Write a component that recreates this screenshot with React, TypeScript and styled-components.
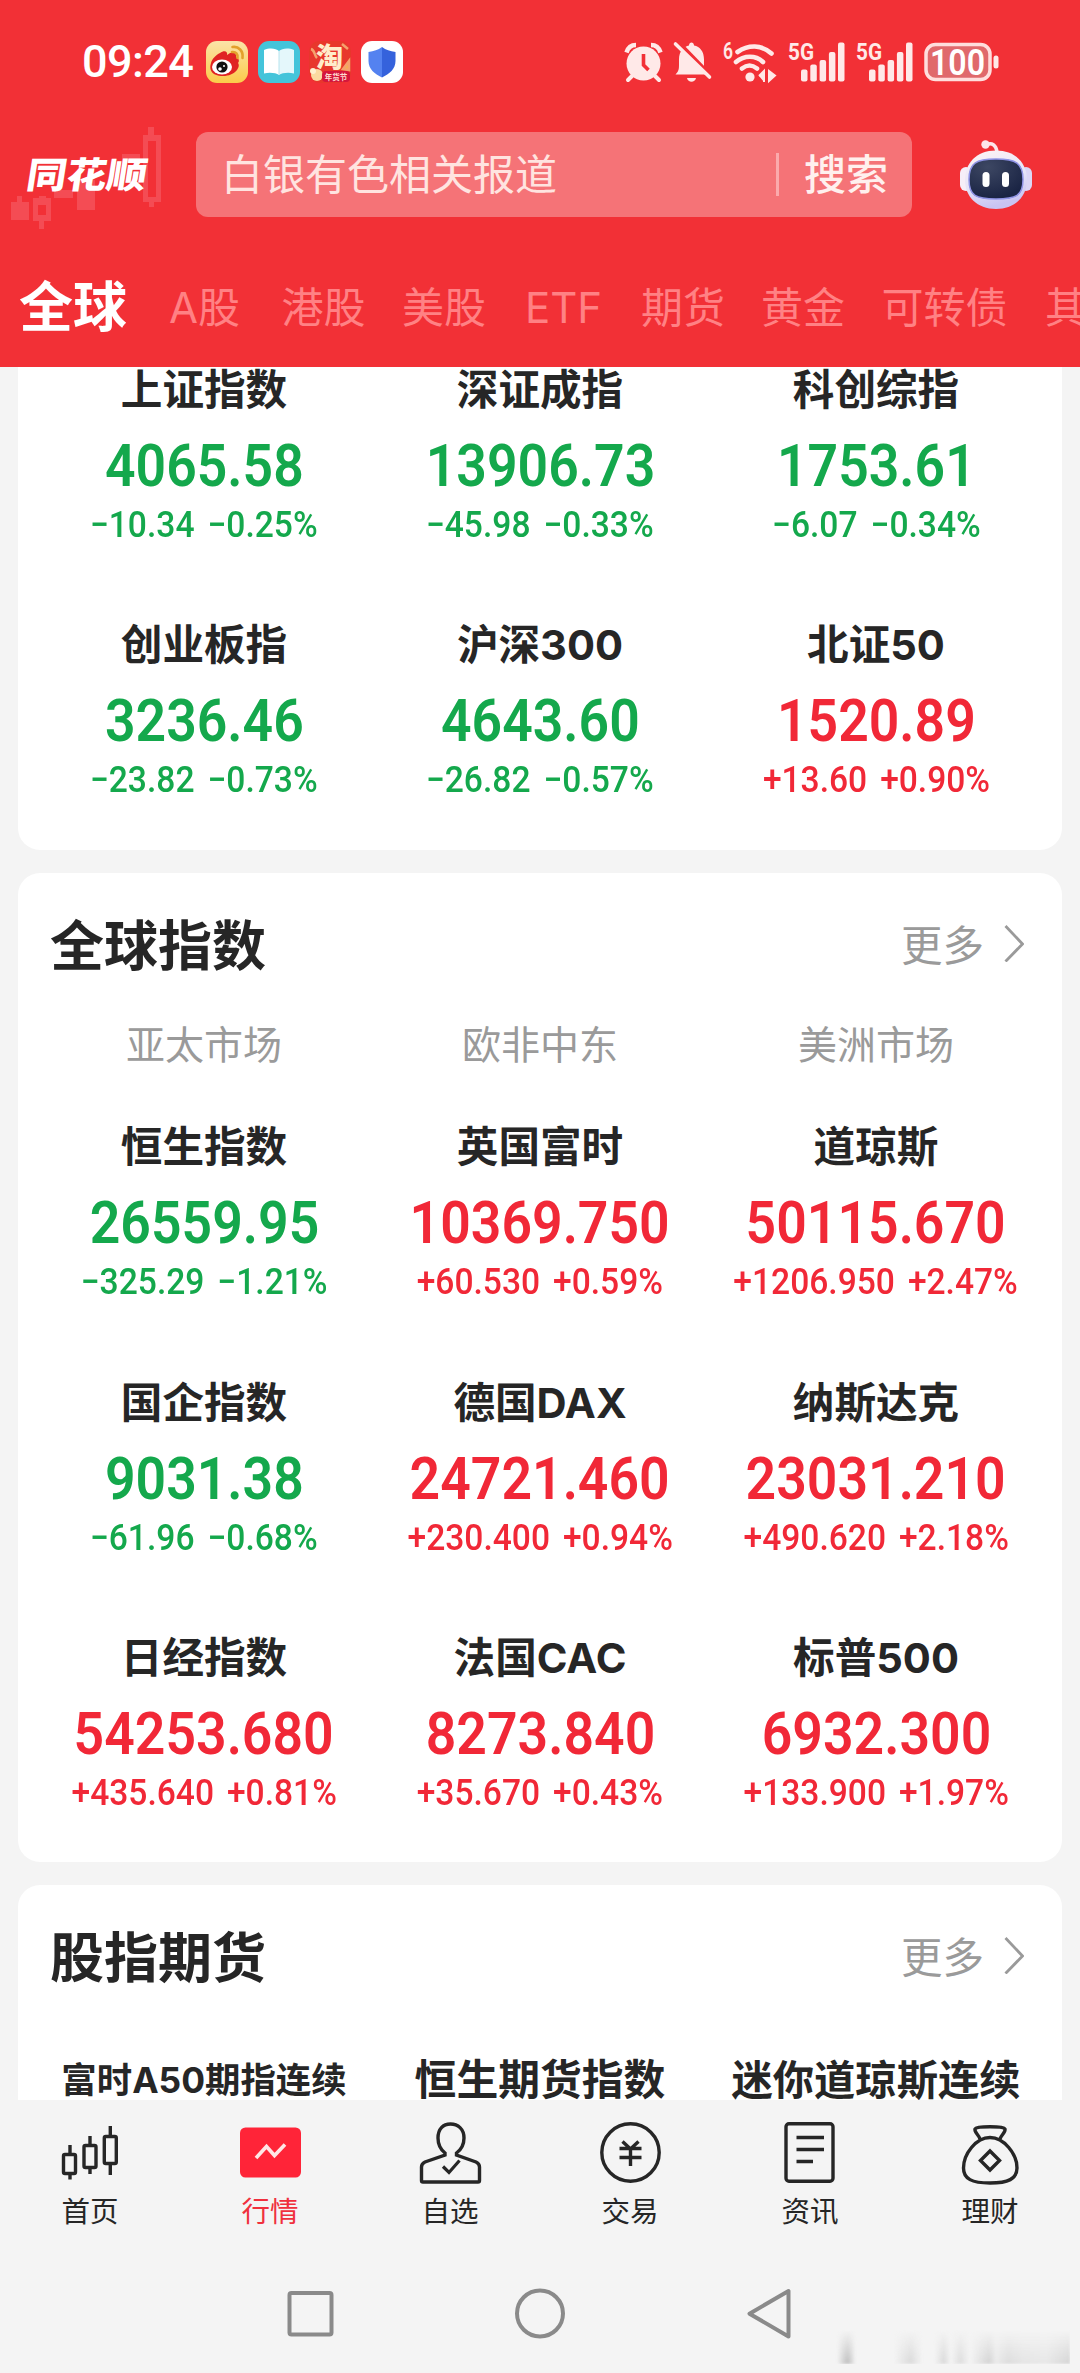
import React from 'react';
import styled, { createGlobalStyle } from 'styled-components';

const RED = '#f23036';
const UP = '#f12837';
const DOWN = '#14a84c';
const INK = '#262626';
const CJK = '"Noto Sans CJK SC", "Noto Sans", sans-serif';
const MIXED = 'Inter, "Noto Sans CJK SC", sans-serif';
const NUM = 'Roboto, "Liberation Sans", sans-serif';

const GlobalStyle = createGlobalStyle`
  * { box-sizing: border-box; }
  body { margin: 0; background: #f4f4f4; font-family: ${CJK}; color: ${INK}; }
`;

const Screen = styled.div`
  display: flex;
  flex-direction: column;
  width: 1080px;
  height: 2373px;
  overflow: hidden;
  background: #f4f4f4;
`;

/* ---------- header ---------- */
const Header = styled.header`
  flex: none;
  display: flex;
  flex-direction: column;
  height: 367px;
  background: ${RED};
`;
const StatusBar = styled.div`
  display: flex;
  align-items: center;
  height: 124px;
  padding: 0 80px 0 82px;
`;
const Clock = styled.span`
  width: 124px;
  font: 500 45px/60px ${NUM};
  color: #fff;
  letter-spacing: -0.6px;
`;
const AppIcons = styled.div`
  display: flex;
  gap: 9.6px;
  flex: 1;
  svg { display: block; width: 42px; height: 42px; }
`;
const Signals = styled.div`
  display: flex;
  align-items: center;
  gap: 11px;
  svg { display: block; overflow: visible; }
`;

const SearchRow = styled.div`
  display: flex;
  align-items: center;
  height: 101px;
`;
const Brand = styled.div`
  display: grid;
  width: 196px;
  height: 115px;
  align-items: center;
  > * { grid-area: 1 / 1; }
`;
const BrandName = styled.span`
  padding: 0 0 5px 27px;
  font: 900 40px/48px ${CJK};
  color: #fff;
  transform: skewX(-9deg) scaleY(0.9);
  transform-origin: 90px 50%;
`;
const SearchBox = styled.div`
  display: flex;
  align-items: center;
  width: 716px;
  height: 85px;
  padding: 0 24px 0 25px;
  border-radius: 12px;
  background: #f57377;
  font-size: 42px;
  line-height: 60px;
  color: #ffe4e0;
`;
const Placeholder = styled.span`
  flex: 1;
  padding-bottom: 5px;
`;
const Divider = styled.i`
  width: 3px;
  height: 43px;
  margin-right: 25px;
  background: #fbaaac;
`;
const SearchLabel = styled.span`
  padding-bottom: 5px;
  font-weight: 500;
  color: #fff0ee;
`;
const Robot = styled.svg`
  display: block;
  margin-left: 47px;
`;

const Tabs = styled.nav`
  display: flex;
  height: 142px;
  padding-top: 9px;
  overflow: hidden;
`;
const Tab = styled.span<{ $w: number; $active?: boolean }>`
  flex: none;
  width: ${p => p.$w}px;
  text-align: center;
  white-space: nowrap;
  font-family: ${MIXED};
  font-size: ${p => (p.$active ? 54 : 42)}px;
  font-weight: ${p => (p.$active ? 700 : 400)};
  line-height: ${p => (p.$active ? 147 : 147)}px;
  color: ${p => (p.$active ? '#fff' : '#ff8184')};
`;

/* ---------- content ---------- */
const Content = styled.main`
  flex: none;
  display: flex;
  flex-direction: column;
  gap: 23px;
  height: 1733px;
  padding: 0 18px;
  overflow: hidden;
`;
const Card = styled.section<{ $scrolled?: boolean }>`
  flex: none;
  padding: ${p => (p.$scrolled ? '20px 18px 51px' : '0 18px 50px')};
  margin-top: ${p => (p.$scrolled ? '-23px' : '0')};
  border-radius: 22px;
  background: #fff;
`;
const CardHead = styled.div`
  display: flex;
  align-items: center;
  justify-content: space-between;
  height: 144px;
  padding: 0 20px 4px 14px;
`;
const CardTitle = styled.h2`
  margin: 0;
  font-size: 54px;
  font-weight: 700;
  line-height: 70px;
`;
const More = styled.span`
  display: flex;
  align-items: center;
  gap: 20px;
  font-size: 41.5px;
  line-height: 60px;
  color: #9a9a9a;
`;
const Regions = styled.div`
  display: grid;
  grid-template-columns: repeat(3, 336px);
  height: 104px;
  text-align: center;
  font-size: 39px;
  line-height: 51px;
  color: #9a9a9a;
`;
const Grid = styled.div<{ $offset?: number }>`
  display: grid;
  grid-template-columns: repeat(3, 336px);
  grid-auto-rows: 180px;
  row-gap: 75.4px;
  padding-top: ${p => p.$offset ?? 0}px;
`;
const Cell = styled.div<{ $up?: boolean }>`
  display: flex;
  flex-direction: column;
  align-items: center;
  white-space: nowrap;
  color: ${p => (p.$up ? UP : DOWN)};
`;
const Name = styled.span<{ $size?: number }>`
  height: 50px;
  margin-bottom: 21px;
  font-family: ${MIXED};
  font-size: ${p => p.$size ?? 41.6}px;
  font-weight: 700;
  line-height: 53px;
  color: ${INK};
`;
const Value = styled.span`
  height: 60px;
  margin-bottom: 9px;
  font: 600 60px/62px ${NUM};
  transform: scaleX(0.893);
`;
const Change = styled.span`
  font: 500 36.5px/42px ${NUM};
  word-spacing: 5px;
  transform: scaleX(0.92);
`;

/* ---------- bottom ---------- */
const BottomNav = styled.nav`
  flex: none;
  display: grid;
  grid-template-columns: repeat(6, 180px);
  height: 150px;
`;
const NavItem = styled.div<{ $active?: boolean }>`
  display: flex;
  flex-direction: column;
  align-items: center;
  padding-top: 20px;
  font-size: 28.5px;
  line-height: 40px;
  color: ${p => (p.$active ? '#f0303d' : INK)};
  svg { display: block; }
`;
const SystemBar = styled.div`
  flex: 1;
  display: grid;
  grid-template-columns: 284px 228px 228px 84px 256px;
  height: 123px;
  svg { display: block; }
`;
const SysKey = styled.div`
  display: flex;
  padding-top: 36px;
`;
const Smudge = styled.div`
  align-self: end;
  width: 238px;
  height: 34px;
  margin: 0 0 9px 8px;
  opacity: 0.6;
  filter: blur(1px);
  background:
    linear-gradient(90deg, transparent 0 2%, #aaa 6% 7%, transparent 10% 26%, #ccc 33%, transparent 38% 43%, #ccc 47%, transparent 50%, #d2d2d2 54%, transparent 58%, #c2c2c2 66%, #e6e6e6 69%, #d0d0d0 74%, #ddd 80%, #e2e2e2 90%, #c4c4c4);
  mask-image: linear-gradient(180deg, transparent, #000 90%);
`;

/* ---------- icons ---------- */
const WeiboIcon = () => (
  <svg viewBox="0 0 42 42">
    <defs>
      <linearGradient id="wb" x1="0" y1="0" x2="0" y2="1">
        <stop offset="0" stopColor="#fbe3a8" />
        <stop offset="1" stopColor="#fbcb4a" />
      </linearGradient>
    </defs>
    <rect width="42" height="42" rx="11" fill="url(#wb)" />
    <path d="M14 12c4-3 8-2 7 2 5-4 10-3 9 2 4 2 3 5 2 6 3 4-3 13-15 13S3 28 5 22c1-4 5-8 9-10z" fill="#e02322" />
    <ellipse cx="16" cy="26" rx="10" ry="7.6" fill="#fff" />
    <circle cx="16" cy="26" r="5.6" fill="#111" />
    <circle cx="14" cy="28" r="1.8" fill="#fff" />
    <circle cx="18" cy="25" r="1" fill="#fff" />
    <path d="M26.500 6c6-1 11 4 10 11M26 11c4-.5 6 2 5.500 6" fill="none" stroke="#e3a02c" strokeWidth="2.600" strokeLinecap="round" />
  </svg>
);
const BookIcon = () => (
  <svg viewBox="0 0 42 42">
    <rect width="42" height="42" rx="11" fill="#44c4da" />
    <path d="M6 9c6-2.500 12-1.500 15 1v24c-3-2-9-3-15-1.500z" fill="#fff" />
    <path d="M36 9c-6-2.500-12-1.500-15 1v24c3-2 9-3 15-1.500z" fill="#e4f7fb" />
    <path d="M21 10v24" stroke="#b7e4ee" strokeWidth="1" />
  </svg>
);
const TaobaoIcon = () => (
  <svg viewBox="0 0 42 42">
    <rect width="42" height="42" rx="11" fill="#e8372c" />
    <path d="M2 8c4 1 3 6 6 9M33 3l6 5M34 28l6-8v9z" stroke="#f5a16c" strokeWidth="2.500" fill="#f3b14d" />
    <circle cx="8" cy="34" r="6" fill="#fbd9a0" />
    <circle cx="4" cy="30" r="3" fill="#fff0cf" />
    <rect x="13" y="30" width="28" height="11" rx="4" fill="#d5163c" />
    <text x="20.500" y="26" fontSize="27" fontWeight="900" textAnchor="middle" fill="#ffeccb" fontFamily={CJK}>淘</text>
    <text x="27" y="38.500" fontSize="7.500" fontWeight="700" textAnchor="middle" fill="#ffdcd0" fontFamily={CJK}>年货节</text>
  </svg>
);
const ShieldIcon = () => (
  <svg viewBox="0 0 42 42">
    <rect width="42" height="42" rx="11" fill="#fff" />
    <path d="M21 6c4 3 8 4 13.500 5v9c0 8-6 13-13.500 16.500z" fill="#3562dc" />
    <path d="M21 6c-4 3-8 4-13.500 5v9c0 8 6 13 13.500 16.500z" fill="#5482f0" />
  </svg>
);

const P = '#ffe9e8';
const AlarmIcon = () => (
  <svg width="38" height="40" viewBox="0 0 38 40">
    <circle cx="18.500" cy="21.500" r="17" fill={P} />
    <path d="M1.500 10.500C3 5.500 6.500 3 11 3M26 3c4.500 0 8 2.500 9.500 7.500" stroke={P} strokeWidth="4.500" fill="none" />
    <path d="M8 33l-5 5M29 33l5 5" stroke={P} strokeWidth="4" strokeLinecap="round" />
    <path d="M18.500 12v11l5 5" stroke={RED} strokeWidth="3.600" fill="none" />
  </svg>
);
const BellOffIcon = () => (
  <svg width="38" height="42" viewBox="0 0 38 42">
    <path d="M1.500 33.500c4-4 3.500-6 3.500-15C5 10 10 5.500 15 4.500c0-4 5-4 5 0 6 1 10 6 10 14 0 9-.5 11 4 15z" fill={P} />
    <path d="M13 37h9c-1 5-8 5-9 0z" fill={P} />
    <path d="M4.500 1.500l32 33" stroke={RED} strokeWidth="4" />
    <path d="M1.500 3l34 33" stroke={P} strokeWidth="3.600" strokeLinecap="round" />
  </svg>
);
const WifiIcon = () => (
  <svg width="54" height="42" viewBox="0 0 54 42">
    <text x="0" y="17.500" fontSize="23" fontWeight="600" fill={P} fontFamily={NUM} textLength="10" lengthAdjust="spacingAndGlyphs">6</text>
    <path d="M14.500 11c11-7.500 24-7.500 34 1.500M13 21c8-7 20-7 27 0M19 27.500c5-4 10-4 15 0" stroke={P} strokeWidth="4.600" fill="none" strokeLinecap="round" />
    <circle cx="27" cy="36" r="4.600" fill={P} />
    <path d="M36 35l5-5v11M52 34.500l-6 5.500V30z" stroke={P} strokeWidth="2" fill={P} />
  </svg>
);
const SignalIcon = () => (
  <svg width="57" height="42" viewBox="0 0 57 42">
    <text x="0" y="19" fontSize="24.500" fontWeight="700" fill={P} fontFamily={NUM} textLength="26" lengthAdjust="spacingAndGlyphs">5G</text>
    <g fill={P}>
      <rect x="13" y="28.500" width="6.500" height="12" rx="2" />
      <rect x="22.300" y="23.500" width="6.500" height="17" rx="2" />
      <rect x="31.600" y="19" width="6.500" height="21.500" rx="2" />
      <rect x="40.900" y="11" width="6.500" height="29.500" rx="2" />
      <rect x="50" y="1.500" width="6.500" height="39" rx="2" />
    </g>
  </svg>
);
const BatteryIcon = () => (
  <svg width="76" height="40" viewBox="0 0 76 40">
    <rect x="2" y="2.500" width="64" height="35" rx="9.500" fill="#e0696c" stroke="#ffdedd" strokeWidth="3.500" />
    <rect x="69.500" y="13.500" width="5" height="13" rx="2.500" fill={P} />
    <text x="6" y="32.500" fontSize="36" fontWeight="600" fill="#fff" fontFamily={NUM} textLength="55" lengthAdjust="spacingAndGlyphs">100</text>
  </svg>
);
const BrandCandles = () => (
  <svg width="196" height="115" viewBox="0 117 196 115" fill="#f5525a" opacity="0.85">
    <rect x="11" y="202" width="18" height="18" />
    <rect x="17" y="196" width="5" height="7" />
    <path d="M33 198h6v-2h7v2h5v23h-7v8h-5v-8h-6zM38 205v10h8v-10z" fillRule="evenodd" />
    <path d="M54 190h19v8H54z" />
    <rect x="77" y="180" width="18" height="30" />
    <path d="M122 154h18v8h-18z" />
    <path d="M143 135h5v-8h6v8h7v67h-7v5h-5v-5h-6zM148 141v56h8v-56z" fillRule="evenodd" />
  </svg>
);
const RobotIcon = () => (
  <Robot width="74" height="70" viewBox="0 0 74 70">
    <defs>
      <linearGradient id="rb" x1="0" y1="0" x2="0.300" y2="1">
        <stop offset="0" stopColor="#fff4f4" />
        <stop offset="0.600" stopColor="#e6e4f8" />
        <stop offset="1" stopColor="#c9c4f2" />
      </linearGradient>
      <radialGradient id="face" cx="0.350" cy="0.200" r="0.800">
        <stop offset="0" stopColor="#3d4763" />
        <stop offset="1" stopColor="#1a2444" />
      </radialGradient>
    </defs>
    <path d="M27 5c6-3 10 0 11 7" stroke="#fde5ea" strokeWidth="3.500" fill="none" />
    <circle cx="26.500" cy="4.500" r="4.200" fill="#fde5ea" />
    <rect x="1" y="27" width="12" height="24" rx="6" fill="#f6eef8" />
    <rect x="61" y="27" width="12" height="24" rx="6" fill="#dcd6f6" />
    <path d="M37 10.500c20 0 31 13 31 29.500S56 69 37 69 6 56.500 6 40 17 10.500 37 10.500z" fill="url(#rb)" />
    <path d="M37 19c20 0 27 4 27 20.500S57 59 37 59 10 56 10 39.500 17 19 37 19z" fill="url(#face)" stroke="#8f93e6" strokeWidth="1.500" />
    <rect x="23.500" y="32" width="7" height="15" rx="3.500" fill="#fff" />
    <rect x="43" y="32" width="7" height="15" rx="3.500" fill="#fff" />
  </Robot>
);
const Chevron = () => (
  <svg width="20" height="38" viewBox="0 0 20 38">
    <path d="M1.500 2L18.500 20 1.500 37.500" fill="none" stroke="#9a9a9a" strokeWidth="2.800" />
  </svg>
);

const Line: React.FC<{ children: React.ReactNode }> = ({ children }) => (
  <svg width="64" height="70" viewBox="0 0 64 70" fill="none" stroke={INK} strokeWidth="3.400">{children}</svg>
);
const HomeIcon = () => (
  <Line>
    <rect x="5.500" y="34.500" width="12" height="19" rx="1.500" />
    <rect x="26" y="25.500" width="12" height="22" rx="1.500" />
    <rect x="46.300" y="16.500" width="12" height="27" rx="1.500" />
    <path d="M12 25v9M12 53v6.500M32 16v9M32 47v7M52.300 6v10M52.300 43v12" />
  </Line>
);
const MarketIcon = () => (
  <svg width="64" height="70" viewBox="0 0 64 70">
    <rect x="2" y="7.500" width="61" height="50" rx="5.500" fill="#ff2438" />
    <path d="M18 38l10.500-11.500 8 9L47 24.500" fill="none" stroke="#ffe6e6" strokeWidth="3.600" />
  </svg>
);
const UserIcon = () => (
  <Line>
    <path d="M27 34c-5-4-7-9-7-15 0-9 5-14 12.500-14S46 10 46 19c0 6-2 11-7.500 15v2l19.500 7c2.500 1.200 3.500 2.500 3.500 5v13.500c0 1-.8 1.500-1.500 1.500H5c-.8 0-1.500-.5-1.500-1.500V48c0-2.500 1-3.800 3.500-5l20-7z" transform="translate(0 -1)" />
    <path d="M25 46.500l6 6 10.500-12" strokeWidth="3.200" />
  </Line>
);
const TradeIcon = () => (
  <Line>
    <circle cx="32.500" cy="32.500" r="28.700" />
    <path d="M24.500 21.500l8 7.500 8-7.500M21.500 28.500h22M21.500 37.500h22M32.500 28.500V46" />
  </Line>
);
const NewsIcon = () => (
  <Line>
    <rect x="8" y="3.800" width="47" height="57.500" rx="3" />
    <path d="M18.500 17.500H46M18.500 29.500H46M18.500 41.500h16.500" />
  </Line>
);
const MoneyIcon = () => (
  <Line>
    <path d="M22 19c-1-4-6-7-5-10 1.500-3 28.500-3 30 0 1 3-4 6-5 10" />
    <path d="M32 17.500C18 17.500 5.500 34 5.500 48 5.500 59 14 63 32 63s27-4 27-15c0-14-13-30.500-27-30.500z" />
    <path d="M32 31l9.500 9.500L32 50l-9.500-9.500z" />
  </Line>
);

/* ---------- data ---------- */
type Quote = [name: string, value: string, change: string];
const china: Quote[] = [
  ['上证指数', '4065.58', '−10.34 −0.25%'],
  ['深证成指', '13906.73', '−45.98 −0.33%'],
  ['科创综指', '1753.61', '−6.07 −0.34%'],
  ['创业板指', '3236.46', '−23.82 −0.73%'],
  ['沪深300', '4643.60', '−26.82 −0.57%'],
  ['北证50', '1520.89', '+13.60 +0.90%'],
];
const world: Quote[] = [
  ['恒生指数', '26559.95', '−325.29 −1.21%'],
  ['英国富时', '10369.750', '+60.530 +0.59%'],
  ['道琼斯', '50115.670', '+1206.950 +2.47%'],
  ['国企指数', '9031.38', '−61.96 −0.68%'],
  ['德国DAX', '24721.460', '+230.400 +0.94%'],
  ['纳斯达克', '23031.210', '+490.620 +2.18%'],
  ['日经指数', '54253.680', '+435.640 +0.81%'],
  ['法国CAC', '8273.840', '+35.670 +0.43%'],
  ['标普500', '6932.300', '+133.900 +1.97%'],
];
const futures: [string, number][] = [
  ['富时A50期指连续', 35.4],
  ['恒生期货指数', 41.8],
  ['迷你道琼斯连续', 41.3],
];
const tabs: [string, number][] = [
  ['全球', 146], ['A股', 117], ['港股', 121], ['美股', 120], ['ETF', 119],
  ['期货', 120], ['黄金', 120], ['可转债', 163], ['其', 80],
];
const navItems: [string, React.FC][] = [
  ['首页', HomeIcon], ['行情', MarketIcon], ['自选', UserIcon],
  ['交易', TradeIcon], ['资讯', NewsIcon], ['理财', MoneyIcon],
];

const Quotes: React.FC<{ items: Quote[] }> = ({ items }) => (
  <Grid>
    {items.map(([name, value, change]) => (
      <Cell key={name} $up={change.startsWith('+')}>
        <Name>{name}</Name>
        <Value>{value}</Value>
        <Change>{change}</Change>
      </Cell>
    ))}
  </Grid>
);
const Heading: React.FC<{ title: string }> = ({ title }) => (
  <CardHead>
    <CardTitle>{title}</CardTitle>
    <More>更多<Chevron /></More>
  </CardHead>
);

export default function App() {
  return (
    <Screen>
      <GlobalStyle />
      <Header>
        <StatusBar>
          <Clock>09:24</Clock>
          <AppIcons><WeiboIcon /><BookIcon /><TaobaoIcon /><ShieldIcon /></AppIcons>
          <Signals>
            <AlarmIcon /><BellOffIcon /><WifiIcon /><SignalIcon /><SignalIcon /><BatteryIcon />
          </Signals>
        </StatusBar>
        <SearchRow>
          <Brand><BrandCandles /><BrandName>同花顺</BrandName></Brand>
          <SearchBox>
            <Placeholder>白银有色相关报道</Placeholder>
            <Divider />
            <SearchLabel>搜索</SearchLabel>
          </SearchBox>
          <RobotIcon />
        </SearchRow>
        <Tabs>
          {tabs.map(([label, w], i) => <Tab key={label} $w={w} $active={i === 0}>{label}</Tab>)}
        </Tabs>
      </Header>
      <Content>
        <Card $scrolled><Quotes items={china} /></Card>
        <Card>
          <Heading title="全球指数" />
          <Regions><span>亚太市场</span><span>欧非中东</span><span>美洲市场</span></Regions>
          <Quotes items={world} />
        </Card>
        <Card>
          <Heading title="股指期货" />
          <Grid $offset={25}>
            {futures.map(([name, size]) => <Cell key={name}><Name $size={size}>{name}</Name></Cell>)}
          </Grid>
        </Card>
      </Content>
      <BottomNav>
        {navItems.map(([label, Icon], i) => (
          <NavItem key={label} $active={i === 1}><Icon />{label}</NavItem>
        ))}
      </BottomNav>
      <SystemBar>
        <span />
        <SysKey>
          <svg width="54" height="54" viewBox="0 0 54 54"><rect x="5.500" y="7" width="42" height="41.500" rx="2" fill="none" stroke="#8a8a8a" strokeWidth="4" /></svg>
        </SysKey>
        <SysKey>
          <svg width="56" height="54" viewBox="0 0 56 54"><circle cx="28" cy="27.500" r="23" fill="none" stroke="#8a8a8a" strokeWidth="4" /></svg>
        </SysKey>
        <SysKey>
          <svg width="54" height="56" viewBox="0 0 54 56"><path d="M48.500 5v45.500L9.500 27.700z" fill="none" stroke="#8a8a8a" strokeWidth="4" strokeLinejoin="round" /></svg>
        </SysKey>
        <Smudge />
      </SystemBar>
    </Screen>
  );
}
